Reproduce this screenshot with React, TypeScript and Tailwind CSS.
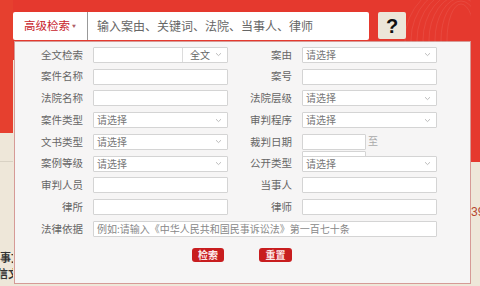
import React from 'react';

const font = { fontFamily: '"Noto Sans CJK SC", "Noto Sans", sans-serif' };

const Chevron = () => (
  <svg width="7" height="5" viewBox="0 0 7 5" className="shrink-0">
    <path d="M1 1.2l2.5 2.4L6 1.2" fill="none" stroke="#b5b5b5" strokeWidth="0.9" />
  </svg>
);

const TextBox = ({ w = 'w-[135px]' }: { w?: string }) => (
  <div className={`${w} h-[16px] bg-white border border-[#d4d4d4] rounded-[1px]`} />
);

const SelectBox = () => (
  <div className="w-[135px] h-[16px] bg-white border border-[#d4d4d4] rounded-[1px] flex items-center justify-between pl-[3px] pr-[5px]">
    <span className="text-[10px] leading-none text-[#777]">请选择</span>
    <Chevron />
  </div>
);

const FullText = () => (
  <div className="w-[135px] h-[16px] bg-white border border-[#d4d4d4] rounded-[1px] flex">
    <div className="w-[88px]" />
    <div className="flex-1 border-l border-[#dcdcdc] flex items-center justify-end gap-[5px] pr-[5px]">
      <span className="text-[10px] leading-none text-[#666]">全文</span>
      <Chevron />
    </div>
  </div>
);

const DateBox = () => (
  <div className="flex items-start h-[16px]">
    <div className="flex flex-col gap-[1px]">
      <TextBox w="w-[64px]" />
      <TextBox w="w-[64px]" />
    </div>
    <span className="text-[10px] leading-none text-[#aaa] ml-[2px] mt-[2px]">至</span>
  </div>
);

type Field = 'text' | 'select' | 'full' | 'date';

const Control = ({ kind }: { kind: Field }) => {
  if (kind === 'select') return <SelectBox />;
  if (kind === 'full') return <FullText />;
  if (kind === 'date') return <DateBox />;
  return <TextBox />;
};

const rows: [string, Field, string, Field][] = [
  ['全文检索', 'full', '案由', 'select'],
  ['案件名称', 'text', '案号', 'text'],
  ['法院名称', 'text', '法院层级', 'select'],
  ['案件类型', 'select', '审判程序', 'select'],
  ['文书类型', 'select', '裁判日期', 'date'],
  ['案例等级', 'select', '公开类型', 'select'],
  ['审判人员', 'text', '当事人', 'text'],
  ['律所', 'text', '律师', 'text'],
];

const App = () => {
  return (
    <div className="w-[480px] h-[286px] overflow-hidden flex bg-[#eee7d9]" style={font}>
      {/* left strip */}
      <div className="w-[13px] shrink-0 flex flex-col overflow-hidden">
        <div className="h-[133px] bg-[#e6402f]" />
        <div className="h-[29px] border-b border-[#d9d2c4]" />
        <div className="mt-[87px] text-[11px] font-bold leading-[16px] text-[#333] whitespace-nowrap">
          <div>事文</div>
          <div className="-ml-[3px]">信文</div>
        </div>
      </div>

      {/* center */}
      <div className="w-[458px] shrink-0 flex flex-col bg-[linear-gradient(to_bottom,#e5392e_0px,#e5392e_60px,#eee7d9_60px)] relative">
        <svg className="absolute right-0 top-0" width="80" height="42" viewBox="0 0 80 42">
          {[0, 1, 2, 3, 4, 5, 6, 7].map((i) => (
            <ellipse key={i} cx={70} cy={40} rx={14 + i * 6} ry={36 + i * 3} fill="none" stroke="#ffffff" strokeOpacity="0.1" strokeWidth="0.8" />
          ))}
        </svg>
        <div className="flex items-start pt-[12px] relative">
          <div className="w-[356px] h-[28px] bg-white rounded-[2px] flex items-center">
            <div className="w-[75px] h-full flex items-center justify-center gap-[2px] border-r border-[#999]">
              <span className="text-[11.5px] text-[#c8242c] leading-none">高级检索</span>
              <span className="text-[4px] text-[#b06068] leading-none">▼</span>
            </div>
            <span className="pl-[9px] text-[12px] text-[#666] leading-none">输入案由、关键词、法院、当事人、律师</span>
          </div>
          <div className="ml-[9px] w-[28px] h-[27px] bg-[#ece6d9] rounded-[2px] flex items-center justify-center">
            <span className="text-[20px] font-bold leading-none text-[#111]" style={{ fontFamily: '"Liberation Sans", Arial, sans-serif' }}>?</span>
          </div>
        </div>

        <div className="ml-[1px] mt-[1px] w-[457px] h-[243px] bg-[#f6f5f5] border border-[#d69a96] pt-[2px]">
          {rows.map(([l, lk, r, rk], i) => (
            <div key={l} className="h-[21.75px] flex items-center relative" style={{ zIndex: i }}>
              <div className="w-[68px] text-right text-[10.5px] leading-none text-[#666]">{l}</div>
              <div className="ml-[10px]">
                <Control kind={lk} />
              </div>
              <div className="w-[64px] text-right text-[10.5px] leading-none text-[#666]">{r}</div>
              <div className="ml-[10px] w-[135px]">
                <Control kind={rk} />
              </div>
            </div>
          ))}
          <div className="h-[21.75px] flex items-center relative z-10">
            <div className="w-[68px] text-right text-[10.5px] leading-none text-[#666]">法律依据</div>
            <div className="ml-[10px] w-[344px] h-[16px] bg-white border border-[#d4d4d4] rounded-[1px] flex items-center pl-[3px]">
              <span className="text-[10px] leading-none text-[#888] whitespace-nowrap">例如:请输入《中华人民共和国民事诉讼法》第一百七十条</span>
            </div>
          </div>
          <div className="flex justify-center gap-[35px] mt-[8px] pr-[1px]">
            <button className="w-[32px] h-[14px] rounded-[3px] bg-[#c81d1f] text-[#fbe9ea] text-[10px] leading-none font-bold">检索</button>
            <button className="w-[33px] h-[14px] rounded-[3px] bg-[#c81d1f] text-[#fbe9ea] text-[10px] leading-none font-bold">重置</button>
          </div>
        </div>
      </div>

      {/* right strip */}
      <div className="w-[9px] shrink-0 flex flex-col overflow-hidden">
        <div className="h-[162px] bg-[#e5392e]" />
        <div className="mt-[44px] text-[12px] leading-none text-[#b5472f] whitespace-nowrap" style={{ fontFamily: '"Liberation Sans", Arial, sans-serif' }}>39</div>
      </div>
    </div>
  );
};

export default App;
